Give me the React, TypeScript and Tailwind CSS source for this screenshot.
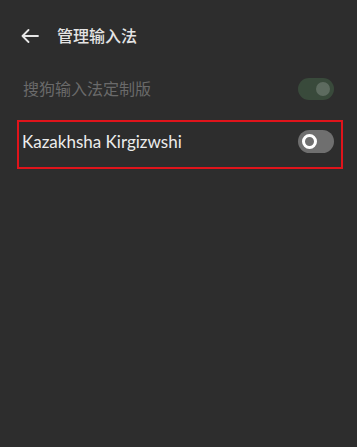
import React from 'react';

function Toggle({ on, disabled }: { on: boolean; disabled?: boolean }) {
  if (on) {
    return (
      <div className={`w-[36px] h-[22px] rounded-full flex items-center justify-end pr-[4px] ${disabled ? 'bg-[#394a3b]' : 'bg-[#2e9e4a]'}`}>
        <div className="w-[14px] h-[14px] rounded-full bg-[#5d6b5f]" />
      </div>
    );
  }
  return (
    <div className="w-[36px] h-[23px] rounded-full flex items-center pl-[4px] bg-[#6f6f6f]">
      <div className="w-[15px] h-[15px] rounded-full border-[3px] border-white bg-[#6f6f6f]" />
    </div>
  );
}

export default function App() {
  return (
    <div
      className="w-[357px] h-[447px] bg-[#2d2d2d] overflow-hidden"
      style={{ fontFamily: '"Noto Sans", "Noto Sans CJK SC", sans-serif' }}
    >
      <div className="h-[72px] flex items-center pl-[21px]">
        <svg width="18" height="14" viewBox="0 0 18 14" fill="none" stroke="#e6e6e6" strokeWidth="1.8" strokeLinecap="round" strokeLinejoin="round">
          <path d="M17 7H1.5M7.5 1L1.5 7l6 6" />
        </svg>
        <span className="ml-[18px] text-[16px] text-[#e4e4e4] font-medium leading-none">管理输入法</span>
      </div>

      <div className="h-[34px] flex items-center justify-between pl-[23px] pr-[23px]">
        <span className="text-[16px] text-[#6a6a6a] leading-none">搜狗输入法定制版</span>
        <Toggle on disabled />
      </div>

      <div className="mt-[14px] ml-[17px] mr-[14px] h-[49px] border-2 border-[#e0141b] flex items-center justify-between pl-[3px] pr-[7px] pb-[7px]">
        <span className="text-[17px] text-[#ececec] leading-none" style={{ fontFamily: 'Lato, "Noto Sans", sans-serif' }}>
          Kazakhsha Kirgizwshi
        </span>
        <Toggle on={false} />
      </div>
    </div>
  );
}
